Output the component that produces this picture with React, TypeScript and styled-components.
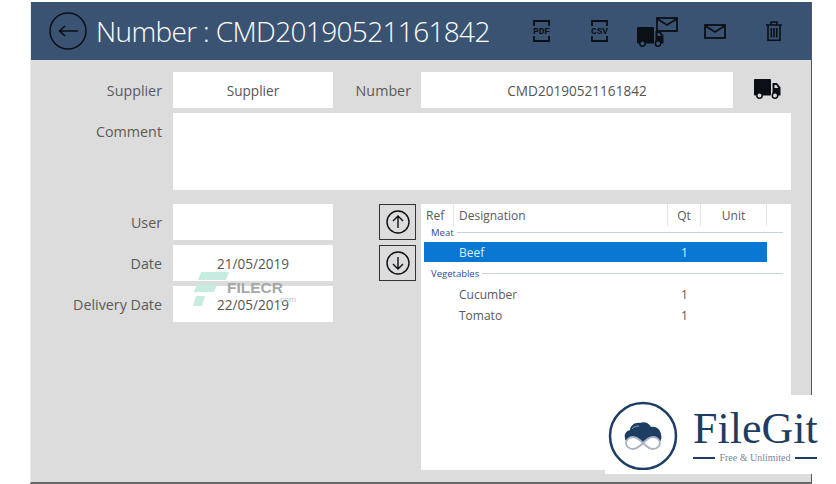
import React from 'react';
import styled, { createGlobalStyle } from 'styled-components';

const GlobalStyle = createGlobalStyle`
  html, body { margin: 0; padding: 0; background: #fff; }
  body { font-family: "Open Sans", "Noto Sans", sans-serif; width: 836px; height: 484px; overflow: hidden; }
`;

const TruckIcon: React.FC<{ bg: string }> = ({ bg }) => (
  <svg width="27" height="20" viewBox="0 0 27 20" fill="#0b0f16">
    <rect x="0" y="0" width="17" height="16.500" rx="1" />
    <path d="M18.500 4h4.500l3.500 4.500v8h-8z" />
    <path d="M20.500 6h1.800l2 3h-3.800z" fill={bg} />
    <circle cx="5.500" cy="16.500" r="2.700" fill={bg} stroke="#0b0f16" strokeWidth="1.500" />
    <circle cx="21" cy="16.500" r="2.700" fill={bg} stroke="#0b0f16" strokeWidth="1.500" />
  </svg>
);

const MailIcon: React.FC = () => (
  <svg width="22" height="15" viewBox="0 0 22 15" fill="none" stroke="#0b0f16" strokeWidth="1.800">
    <rect x="1" y="1" width="20" height="13" />
    <path d="M1.500 2l9.500 6 9.500-6" />
  </svg>
);

const FileBadge: React.FC<{ label: string }> = ({ label }) => (
  <Badge>
    <svg width="17" height="22" viewBox="0 0 17 22" fill="none" stroke="#0b0f16" strokeWidth="1.800">
      <path d="M1 6V1h15v5M1 16v5h15v-5" />
    </svg>
    <BadgeText>{label}</BadgeText>
  </Badge>
);

const rows = [
  { group: 'Meat', items: [{ name: 'Beef', qt: 1, selected: true }] },
  {
    group: 'Vegetables',
    items: [
      { name: 'Cucumber', qt: 1, selected: false },
      { name: 'Tomato', qt: 1, selected: false },
    ],
  },
];

export default function App() {
  return (
    <Page>
      <GlobalStyle />
      <Window>
        <Header>
          <BackButton>
            <svg width="38" height="38" viewBox="0 0 38 38" fill="none" stroke="#0b0f16" strokeWidth="1.500">
              <circle cx="19" cy="19" r="18" />
              <path d="M29 19H10M16 14l-5.500 5 5.500 5" strokeWidth="1.600" />
            </svg>
          </BackButton>
          <Title>Number : CMD20190521161842</Title>
          <Tools>
            <FileBadge label="PDF" />
            <FileBadge label="CSV" />
            <TruckMail>
              <TruckIcon bg="#3b5372" />
              <MailOver><MailIcon /></MailOver>
            </TruckMail>
            <ToolMail><MailIcon /></ToolMail>
            <svg width="16" height="21" viewBox="0 0 16 21" fill="none" stroke="#0b0f16" strokeWidth="1.600">
              <path d="M0 4h16M5 4V1h6v3M2 4v15.200h12V4M5.300 7v9.500M8 7v9.500M10.700 7v9.500" />
            </svg>
          </Tools>
        </Header>
        <Body>
          <TopRow>
            <Label>Supplier</Label>
            <Field>Supplier</Field>
            <NumberLabel>Number</NumberLabel>
            <NumberField>CMD20190521161842</NumberField>
            <TruckSlot><TruckIcon bg="#dcdcdc" /></TruckSlot>
          </TopRow>
          <CommentRow>
            <Label>Comment</Label>
            <CommentBox />
          </CommentRow>
          <Lower>
            <LeftForm>
              <FormRow><Label>User</Label><Field /></FormRow>
              <FormRow><Label>Date</Label><Field>21/05/2019</Field></FormRow>
              <FormRow><Label>Delivery Date</Label><Field>22/05/2019</Field></FormRow>
            </LeftForm>
            <Arrows>
              <ArrowButton>
                <svg width="24" height="24" viewBox="0 0 24 24" fill="none" stroke="#0b0f16" strokeWidth="1.400">
                  <circle cx="12" cy="12" r="11" />
                  <path d="M12 18V6M7 11l5-5 5 5" />
                </svg>
              </ArrowButton>
              <ArrowButton>
                <svg width="24" height="24" viewBox="0 0 24 24" fill="none" stroke="#0b0f16" strokeWidth="1.400">
                  <circle cx="12" cy="12" r="11" />
                  <path d="M12 6v12M7 13l5 5 5-5" />
                </svg>
              </ArrowButton>
            </Arrows>
            <ListPanel>
              <ListHead>
                <HeadCell $w={30} $pad={2}>Ref</HeadCell>
                <HeadCell $w={214} $pad={5}>Designation</HeadCell>
                <HeadCell $w={33} $center>Qt</HeadCell>
                <HeadCell $w={66} $center>Unit</HeadCell>
              </ListHead>
              {rows.map(g => (
                <Group key={g.group}>
                  <GroupTitle><span>{g.group}</span><GroupLine /></GroupTitle>
                  <GroupItems>
                    {g.items.map(item => (
                      <ListRow key={item.name} $selected={item.selected}>
                        <NameCell>{item.name}</NameCell>
                        <QtCell>{item.qt}</QtCell>
                      </ListRow>
                    ))}
                  </GroupItems>
                </Group>
              ))}
            </ListPanel>
          </Lower>
        </Body>
      </Window>
      <Watermark>
        <svg width="36" height="34" viewBox="0 0 36 34" fill="#c6ebe1">
          <path d="M8 0h28l-3 8H5zM4 12h20l-3 8H1zM3 24h9l-3 10H0z" />
        </svg>
        <WatermarkName>FILECR</WatermarkName>
        <WatermarkCom>.com</WatermarkCom>
      </Watermark>
      <LogoCard>
        <svg width="70" height="70" viewBox="0 0 70 70" fill="none">
          <circle cx="35" cy="36" r="33" stroke="#1d3d63" strokeWidth="2.500" />
          <path d="M17 38c-1-4 1-7 5-8 0-4 5-8 10-7 4-2 9 0 11 4 5-1 9 2 10 7 1 3 0 6-1 8H19c-1-1-2-2-2-4z" fill="#1d3d63" />
          <path d="M24 29c1-2 4-3 7-3" stroke="#8fa3ba" strokeWidth="1" />
          <path d="M35 43c-3-3-6-6-10-6-4 0-7 3-7 6s3 6 7 6c4 0 7-3 10-6zm0 0c3-3 6-6 10-6 4 0 7 3 7 6s-3 6-7 6c-4 0-7-3-10-6z" fill="#fff" stroke="#aab4c0" strokeWidth="1.800" />
        </svg>
        <LogoText>
          <LogoName>FileGit</LogoName>
          <LogoTag><Dash /><span>Free &amp; Unlimited</span><Dash /></LogoTag>
        </LogoText>
      </LogoCard>
    </Page>
  );
}

const Page = styled.div`
  position: relative;
  width: 836px;
  height: 484px;
  padding: 2px 0 0 30px;
  box-sizing: border-box;
  overflow: hidden;
`;

const Window = styled.div`
  width: 780px;
  height: 480px;
  display: flex;
  flex-direction: column;
  background: #dcdcdc;
  border-right: 1px solid #55585c;
  border-bottom: 2px solid #666;
  border-left: 1px solid #ececec;
  box-sizing: content-box;
`;

const Header = styled.div`
  height: 58px;
  flex: none;
  display: flex;
  align-items: center;
  background: #3b5372;
  padding: 0 29px 0 18px;
`;

const BackButton = styled.div`
  display: flex;
  width: 38px;
  height: 38px;
`;

const Title = styled.div`
  margin-left: 9px;
  font-size: 28px;
  letter-spacing: -0.65px;
  color: #fff;
  white-space: nowrap;
  font-weight: 300;
`;

const Tools = styled.div`
  margin-left: auto;
  display: flex;
  align-items: center;
  gap: 29px;
`;

const Badge = styled.div`
  position: relative;
  width: 17px;
  height: 22px;
  display: flex;

  &:first-child {
    margin-right: 12px;
  }
`;

const BadgeText = styled.span`
  position: absolute;
  inset: 0;
  display: flex;
  align-items: center;
  justify-content: center;
  font-family: "Liberation Mono", monospace;
  font-size: 9.500px;
  font-weight: 700;
  color: #0b0f16;
`;

const TruckMail = styled.div`
  position: relative;
  width: 27px;
  height: 20px;
  margin-top: 11px;
  margin-right: 11px;
`;

const MailOver = styled.div`
  position: absolute;
  left: 19px;
  top: -12px;
`;

const ToolMail = styled.div`
  display: flex;
  margin-right: 11px;
`;

const Body = styled.div`
  flex: 1;
  padding: 12px 20px 12px 0;
  display: flex;
  flex-direction: column;
`;

const TopRow = styled.div`
  display: flex;
  height: 36px;
`;

const Label = styled.div`
  width: 131px;
  flex: none;
  margin-right: 11px;
  text-align: right;
  font-size: 14.300px;
  line-height: 38px;
  height: 36px;
  color: #5a5a5a;
  white-space: nowrap;
`;

const Field = styled.div`
  width: 160px;
  height: 36px;
  flex: none;
  background: #fff;
  text-align: center;
  font-size: 13.600px;
  line-height: 38px;
  color: #555;
`;

const NumberLabel = styled(Label)`
  width: 78px;
  margin-right: 10px;
`;

const NumberField = styled(Field)`
  width: 312px;
`;

const TruckSlot = styled.div`
  width: 58px;
  padding-left: 21px;
  padding-top: 7px;
  box-sizing: border-box;
`;

const CommentRow = styled.div`
  margin-top: 5px;
  display: flex;
`;

const CommentBox = styled.div`
  flex: 1;
  height: 77px;
  background: #fff;
`;

const Lower = styled.div`
  margin-top: 14px;
  display: flex;
  flex: 1;
`;

const LeftForm = styled.div`
  display: flex;
  flex-direction: column;
  gap: 5px;
`;

const FormRow = styled.div`
  display: flex;
`;

const Arrows = styled.div`
  margin-left: 46px;
  display: flex;
  flex-direction: column;
  gap: 5px;
`;

const ArrowButton = styled.div`
  width: 37px;
  height: 36px;
  box-sizing: border-box;
  border: 1px solid #333;
  display: flex;
  align-items: center;
  justify-content: center;
`;

const ListPanel = styled.div`
  margin-left: 5px;
  flex: 1;
  height: 266px;
  background: #fff;
  padding-left: 3px;
`;

const ListHead = styled.div`
  display: flex;
  height: 22px;
`;

const HeadCell = styled.div<{ $w: number; $pad?: number; $center?: boolean }>`
  width: ${p => p.$w}px;
  box-sizing: border-box;
  border-right: 1px solid #e6e6e6;
  font-size: 12px;
  line-height: 23px;
  color: #5a5a5a;
  padding-left: ${p => p.$pad ?? 0}px;
  text-align: ${p => (p.$center ? 'center' : 'left')};
`;

const Group = styled.div`
  margin-bottom: 5px;
`;

const GroupTitle = styled.div`
  height: 12px;
  display: flex;
  align-items: center;
  gap: 3px;
  padding: 0 8px 0 7px;
  font-size: 9.500px;
  color: #2f4a9a;
`;

const GroupLine = styled.div`
  flex: 1;
  height: 1px;
  background: #c9d1dc;
`;

const GroupItems = styled.div`
  margin-top: 4px;
`;

const ListRow = styled.div<{ $selected: boolean }>`
  width: 343px;
  height: ${p => (p.$selected ? 20 : 21)}px;
  box-sizing: border-box;
  padding-top: ${p => (p.$selected ? 0 : 2)}px;
  display: flex;
  align-items: center;
  font-size: 12px;
  background: ${p => (p.$selected ? '#0a78d2' : 'transparent')};
  color: ${p => (p.$selected ? '#d9ecfb' : '#5a5a5a')};
`;

const NameCell = styled.div`
  width: 257px;
  padding-left: 35px;
  box-sizing: border-box;
`;

const QtCell = styled.div`
  width: 7px;
`;

const Watermark = styled.div`
  position: absolute;
  left: 193px;
  top: 272px;
  width: 110px;
  height: 34px;
`;

const WatermarkName = styled.div`
  position: absolute;
  left: 34px;
  top: 7px;
  font-family: "Liberation Sans", sans-serif;
  font-weight: 700;
  font-size: 15.500px;
  color: #a4a8a8;
`;

const WatermarkCom = styled.div`
  position: absolute;
  left: 85px;
  top: 21px;
  font-size: 8px;
  color: #b8bcbc;
`;

const LogoCard = styled.div`
  position: absolute;
  left: 605px;
  top: 395px;
  width: 212px;
  height: 79px;
  background: #fff;
  display: flex;
  align-items: center;
  padding-left: 3px;
  box-sizing: border-box;
`;

const LogoText = styled.div`
  margin-left: 15px;
  width: 124px;
  display: flex;
  flex-direction: column;
  align-items: stretch;
`;

const LogoName = styled.div`
  font-family: "Liberation Serif", serif;
  font-size: 44px;
  line-height: 46px;
  color: #1d3d63;
  white-space: nowrap;
`;

const LogoTag = styled.div`
  display: flex;
  align-items: center;
  justify-content: space-between;
  font-family: "Liberation Serif", serif;
  font-size: 10px;
  line-height: 12px;
  color: #7a8796;
  white-space: nowrap;
`;

const Dash = styled.div`
  width: 22px;
  height: 2px;
  background: #1d3d63;
`;
